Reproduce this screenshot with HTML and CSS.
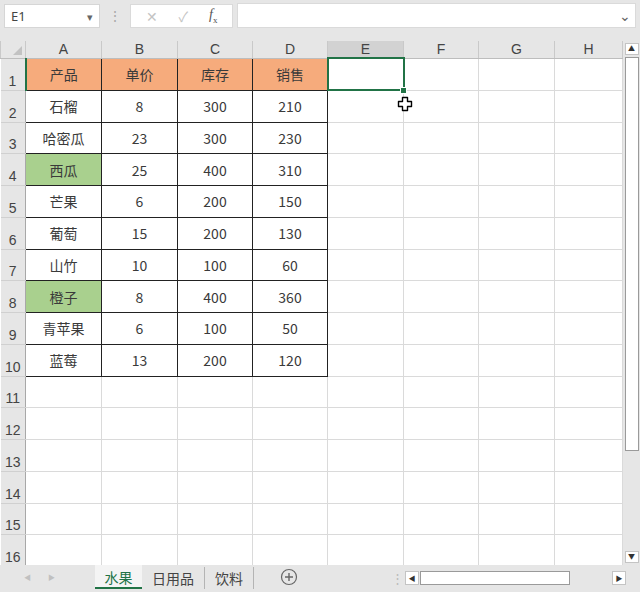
FILE: index.html
```html
<!DOCTYPE html>
<html>
<head>
<meta charset="utf-8">
<title>水果</title>
<link rel="stylesheet" href="styles.css">
</head>
<body>

<!-- barra de fórmulas -->
<div class="toolbar">
  <div class="namebox"><span>E1</span><span class="caret">&#9662;</span></div>
  <div class="grip">&#8942;</div>
  <div class="funcbox">
    <span class="fbtn">&#10005;</span>
    <span class="fbtn">&#10003;</span>
    <span class="fbtn fx"><i>f</i><sub>x</sub></span>
  </div>
  <div class="formula"><span class="chev">&#8964;</span></div>
</div>

<div class="main">
  <table class="sheet">
    <colgroup>
      <col style="width:25px"><col style="width:76px"><col style="width:76px"><col style="width:75px"><col style="width:75px">
      <col style="width:76px"><col style="width:75px"><col style="width:76px"><col style="width:68px">
    </colgroup>
    <tr class="colhead">
      <th class="corner"><span class="tri"></span></th>
      <th>A</th><th>B</th><th>C</th><th>D</th><th class="on">E</th><th>F</th><th>G</th><th>H</th>
    </tr>
    <tr><th class="rn on">1</th><td class="d org">产品</td><td class="d org">单价</td><td class="d org">库存</td><td class="d org">销售</td><td class="sel"></td><td></td><td></td><td></td></tr>
    <tr><th class="rn">2</th><td class="d">石榴</td><td class="d">8</td><td class="d">300</td><td class="d">210</td><td></td><td></td><td></td><td></td></tr>
    <tr><th class="rn">3</th><td class="d">哈密瓜</td><td class="d">23</td><td class="d">300</td><td class="d">230</td><td></td><td></td><td></td><td></td></tr>
    <tr><th class="rn">4</th><td class="d grn">西瓜</td><td class="d">25</td><td class="d">400</td><td class="d">310</td><td></td><td></td><td></td><td></td></tr>
    <tr><th class="rn">5</th><td class="d">芒果</td><td class="d">6</td><td class="d">200</td><td class="d">150</td><td></td><td></td><td></td><td></td></tr>
    <tr><th class="rn">6</th><td class="d">葡萄</td><td class="d">15</td><td class="d">200</td><td class="d">130</td><td></td><td></td><td></td><td></td></tr>
    <tr><th class="rn">7</th><td class="d">山竹</td><td class="d">10</td><td class="d">100</td><td class="d">60</td><td></td><td></td><td></td><td></td></tr>
    <tr><th class="rn">8</th><td class="d grn">橙子</td><td class="d">8</td><td class="d">400</td><td class="d">360</td><td></td><td></td><td></td><td></td></tr>
    <tr><th class="rn">9</th><td class="d">青苹果</td><td class="d">6</td><td class="d">100</td><td class="d">50</td><td></td><td></td><td></td><td></td></tr>
    <tr><th class="rn">10</th><td class="d">蓝莓</td><td class="d">13</td><td class="d">200</td><td class="d">120</td><td></td><td></td><td></td><td></td></tr>
    <tr><th class="rn">11</th><td></td><td></td><td></td><td></td><td></td><td></td><td></td><td></td></tr>
    <tr><th class="rn">12</th><td></td><td></td><td></td><td></td><td></td><td></td><td></td><td></td></tr>
    <tr><th class="rn">13</th><td></td><td></td><td></td><td></td><td></td><td></td><td></td><td></td></tr>
    <tr><th class="rn">14</th><td></td><td></td><td></td><td></td><td></td><td></td><td></td><td></td></tr>
    <tr><th class="rn">15</th><td></td><td></td><td></td><td></td><td></td><td></td><td></td><td></td></tr>
    <tr><th class="rn">16</th><td></td><td></td><td></td><td></td><td></td><td></td><td></td><td></td></tr>
  </table>

  <!-- barra vertical -->
  <div class="vscroll">
    <div class="sbtn">&#9650;</div>
    <div class="vthumb"></div>
    <div class="vtrack"></div>
    <div class="sbtn">&#9660;</div>
  </div>

  <!-- cursor del ratón -->
  <svg class="cursor" width="16" height="16" viewBox="0 0 16 16">
    <path d="M5.5 1.5h5v4h4v5h-4v4h-5v-4h-4v-5h4z" fill="#fff" stroke="#000" stroke-width="1.4" stroke-linejoin="round"/>
  </svg>
</div>

<div class="tabbar">
  <div class="navs"><span>&#9664;</span><span>&#9654;</span></div>
  <div class="tab active">水果</div>
  <div class="tab">日用品</div>
  <div class="tab">饮料</div>
  <div class="addtab">
    <svg width="18" height="18" viewBox="0 0 18 18">
      <circle cx="9" cy="9" r="7.5" fill="none" stroke="#666" stroke-width="1.2"/>
      <path d="M9 5v8M5 9h8" stroke="#666" stroke-width="1.4"/>
    </svg>
  </div>
  <div class="split">&#8942;</div>
  <div class="hscroll">
    <div class="sbtn">&#9664;</div>
    <div class="hthumb"></div>
    <div class="htrack"></div>
    <div class="sbtn">&#9654;</div>
  </div>
</div>

</body>
</html>
```

FILE: styles.css
```css
body {
    margin: 0;
    width: 640px;
    height: 592px;
    overflow: hidden;
    background-color: #e6e6e6;
    font-family: "Noto Sans", "Noto Sans CJK SC", sans-serif;
    color: #333;
}

/* barra de fórmulas */
.toolbar {
    height: 41px;
    display: flex;
    align-items: flex-start;
    padding: 4px 4px 0 4px;
    box-sizing: border-box;
}

.namebox {
    width: 96px;
    height: 24px;
    box-sizing: border-box;
    background-color: #fff;
    border: 1px solid #d6d6d6;
    display: flex;
    align-items: center;
    justify-content: space-between;
    padding: 0 6px 0 6px;
    font-size: 13px;
    color: #444;
}

.caret {
    font-size: 11px;
    color: #666;
}

.grip {
    width: 30px;
    text-align: center;
    color: #aaa;
    font-size: 14px;
    line-height: 24px;
}

.funcbox {
    width: 103px;
    height: 24px;
    box-sizing: border-box;
    background-color: #fff;
    border: 1px solid #dadada;
    display: flex;
    align-items: center;
    justify-content: space-around;
    padding: 0 4px;
}

.fbtn {
    color: #c4c4c4;
    font-size: 14px;
}

.fx {
    color: #555;
    font-family: "Liberation Serif", serif;
    font-size: 14px;
}

.fx sub {
    font-size: 9px;
}

.formula {
    flex: 1;
    margin-left: 4px;
    margin-top: -1px;
    height: 25px;
    box-sizing: border-box;
    background-color: #fff;
    border: 1px solid #dadada;
    display: flex;
    align-items: center;
    justify-content: flex-end;
    padding-right: 4px;
}

.chev {
    color: #666;
    font-size: 14px;
    line-height: 10px;
}

/* hoja */
.main {
    position: relative;
    display: flex;
    align-items: flex-start;
    height: 524px;
    overflow: hidden;
}

.sheet {
    table-layout: fixed;
    border-collapse: collapse;
    width: 622px;
    background-color: #fff;
}

.sheet td {
    height: 30.75px;
    padding: 0;
    border: 1px solid #dadada;
    text-align: center;
    font-family: "Noto Sans CJK SC", sans-serif;
    font-size: 14px;
    line-height: 18px;
    color: #3a3a3a;
}

.sheet td.d {
    border: 1px solid #222;
}

.org {background-color: #f6ab7c;}
.grn {background-color: #a9d08e;}

.sel {
    position: relative;
    outline: 2px solid #217346;
    outline-offset: -1px;
}

.sel::after {
    content: "";
    position: absolute;
    right: -4px;
    bottom: -4px;
    width: 5px;
    height: 5px;
    background-color: #217346;
    border: 1px solid #fff;
}

.colhead th {
    height: 16px;
    padding: 0;
    background-color: #e6e6e6;
    border-left: 1px solid #c9c9c9;
    border-right: 1px solid #c9c9c9;
    border-bottom: 1px solid #bdbdbd;
    font-family: "Liberation Sans", sans-serif;
    font-weight: normal;
    font-size: 14px;
    line-height: 16px;
    color: #444;
}

.colhead th.on {
    background-color: #d2d2d2;
    border-bottom: 2px solid #217346;
}

.corner {
    position: relative;
}

.tri {
    position: absolute;
    right: 3px;
    bottom: 3px;
    width: 0;
    height: 0;
    border-left: 9px solid transparent;
    border-bottom: 9px solid #c2c2c2;
}

.rn {
    background-color: #e6e6e6;
    border-right: 1px solid #a8a8a8;
    border-bottom: 1px solid #d0d0d0;
    font-family: "Liberation Sans", sans-serif;
    font-weight: normal;
    font-size: 14px;
    color: #444;
    vertical-align: bottom;
    padding: 0 0 1px 0;
    line-height: 16px;
}

.rn.on {
    border-right: 2px solid #217346;
}

/* barras de desplazamiento */
.vscroll {
    width: 18px;
    height: 524px;
    display: flex;
    flex-direction: column;
    align-items: center;
    padding: 2px 0;
    box-sizing: border-box;
}

.sbtn {
    width: 14px;
    height: 12px;
    box-sizing: border-box;
    background-color: #fff;
    border: 1px solid #c4c4c4;
    font-size: 7px;
    line-height: 10px;
    text-align: center;
    color: #333;
}

.vthumb {
    width: 14px;
    height: 394px;
    margin-top: 2px;
    box-sizing: border-box;
    background-color: #fff;
    border: 1px solid #9a9a9a;
}

.vtrack {
    flex: 1;
}

.cursor {
    position: absolute;
    left: 397px;
    top: 55px;
}

/* pestañas */
.tabbar {
    height: 27px;
    display: flex;
    align-items: flex-start;
    font-family: "Noto Sans CJK SC", sans-serif;
}

.navs {
    width: 95px;
    display: flex;
    gap: 17px;
    padding-left: 24px;
    box-sizing: border-box;
    font-size: 7px;
    line-height: 25px;
    color: #c0c0c0;
}

.tab {
    height: 22px;
    padding: 0 10px;
    font-size: 14px;
    line-height: 22px;
    color: #444;
    border-right: 1px solid #b4b4b4;
    margin-top: 2px;
    white-space: nowrap;
}

.tab.active {
    width: 47px;
    padding: 0;
    box-sizing: border-box;
    margin-top: 0;
    height: 24px;
    line-height: 24px;
    background-color: #f4f4f4;
    color: #217346;
    border-right: none;
    border-bottom: 2px solid #217346;
    text-align: center;
}

.addtab {
    width: 70px;
    display: flex;
    justify-content: center;
    padding-top: 3px;
}

.split {
    width: 14px;
    margin-left: 67px;
    color: #bbb;
    font-size: 13px;
    line-height: 25px;
}

.hscroll {
    display: flex;
    align-items: center;
    width: 221px;
    margin-top: 6px;
}

.hscroll .sbtn {
    height: 14px;
    line-height: 12px;
}

.hthumb {
    width: 150px;
    height: 14px;
    margin-left: 1px;
    box-sizing: border-box;
    background-color: #fff;
    border: 1px solid #9a9a9a;
}

.htrack {
    flex: 1;
}
```
